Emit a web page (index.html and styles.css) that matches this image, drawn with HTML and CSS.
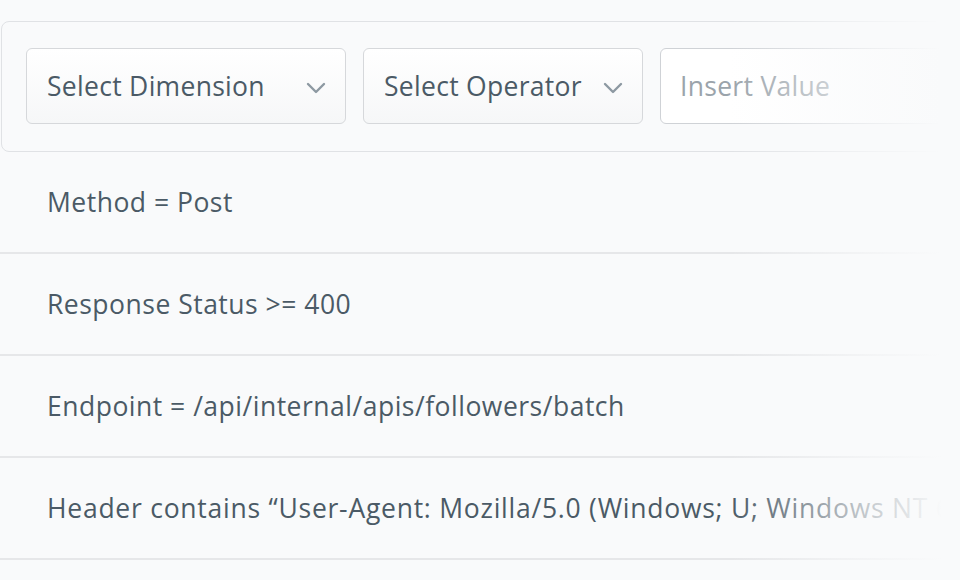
FILE: index.html
```html
<!DOCTYPE html>
<html>
<head>
<meta charset="utf-8">
<link rel="stylesheet" href="styles.css">
</head>
<body>
<div class="page">
  <div class="panel">
    <div class="select select-dim">
      <span>Select Dimension</span>
      <svg class="chev" width="20" height="12" viewBox="0 0 20 12"><path d="M2 2 L10 10 L18 2" fill="none" stroke="#8d99a2" stroke-width="2.4" stroke-linecap="round" stroke-linejoin="round"/></svg>
    </div>
    <div class="select select-op">
      <span>Select Operator</span>
      <svg class="chev" width="20" height="12" viewBox="0 0 20 12"><path d="M2 2 L10 10 L18 2" fill="none" stroke="#8d99a2" stroke-width="2.4" stroke-linecap="round" stroke-linejoin="round"/></svg>
    </div>
    <div class="input">
      <span class="placeholder">Insert Value</span>
    </div>
  </div>
  <div class="rows">
    <div class="row">Method = Post</div>
    <div class="row">Response Status &gt;= 400</div>
    <div class="row">Endpoint = /api/internal/apis/followers/batch</div>
    <div class="row row-long">Header contains “User-Agent: Mozilla/5.0 (Windows; U; Windows NT 6.1)”</div>
  </div>
  <div class="fade"></div>
</div>
</body>
</html>
```
FILE: styles.css
```css
html, body {
  margin: 0;
  padding: 0;
  background: #f9fafb;
  overflow: hidden;
}
body {
  width: 960px;
  height: 580px;
  font-family: "Open Sans", Lato, sans-serif;
  color: #4b5a66;
  letter-spacing: 0.3px;
}
.page {
  position: relative;
  width: 960px;
  height: 580px;
  overflow: hidden;
}
.panel {
  margin: 21px 0 0 1px;
  width: 1200px;
  border: 1px solid #e0e2e5;
  border-radius: 8px;
  padding: 26px 0 27px 24px;
  display: flex;
  gap: 17px;
}
.select {
  box-sizing: border-box;
  height: 76px;
  border: 1px solid #d6d8db;
  border-radius: 6px;
  background: linear-gradient(#ffffff, #f6f7f8);
  display: flex;
  align-items: center;
  justify-content: space-between;
  padding: 0 19px 0 20px;
  font-size: 26.5px;
}
.select-dim { width: 320px; }
.select-op { width: 280px; }
.chev { margin-top: 4px; }
.input {
  box-sizing: border-box;
  height: 76px;
  width: 500px;
  border: 1px solid #cfd2d6;
  border-radius: 6px;
  background: #ffffff;
  display: flex;
  align-items: center;
  padding: 0 19px;
  font-size: 26.5px;
}
.placeholder { color: #9ba4ab; }
.rows { width: 1200px; }
.row {
  box-sizing: border-box;
  height: 102px;
  border-bottom: 2px solid #e6e7e9;
  display: flex;
  align-items: center;
  padding-left: 47px;
  font-size: 26.5px;
  white-space: nowrap;
  letter-spacing: 0.5px;
}
.row-long { letter-spacing: 0.75px; }
.fade {
  position: absolute;
  top: 0;
  right: 0;
  width: 230px;
  height: 100%;
  background: linear-gradient(to right, rgba(249,250,251,0) 0%, rgba(249,250,251,0.7) 60%, rgba(249,250,251,1) 92%);
}
```
